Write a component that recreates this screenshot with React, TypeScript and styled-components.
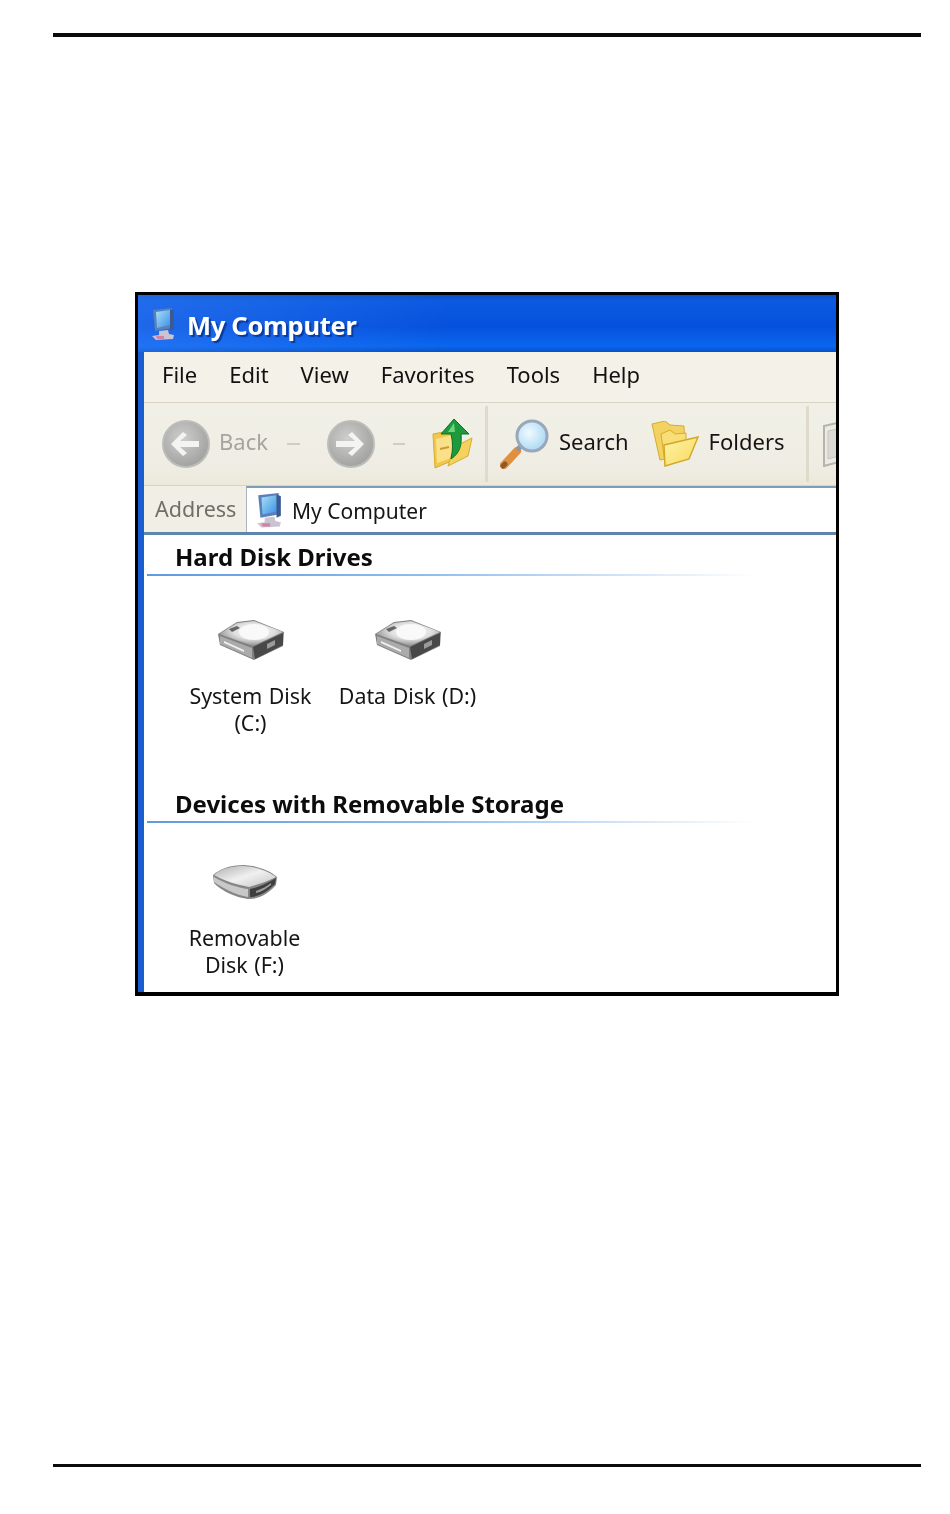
import React from 'react';
import styled, { createGlobalStyle } from 'styled-components';

const GlobalStyle = createGlobalStyle`
  html, body {
    margin: 0;
    padding: 0;
    background: #fff;
  }
`;

const Page = styled.div`
  width: 950px;
  height: 1514px;
  overflow: hidden;
  padding-top: 33px;
  box-sizing: border-box;
  font-family: "Noto Sans", "Liberation Sans", sans-serif;
`;

const Rule = styled.div<{ $thick: number; $top: number }>`
  margin: ${p => p.$top}px 0 0 53px;
  width: 868px;
  height: ${p => p.$thick}px;
  background: #0b0b0b;
`;

const Window = styled.div`
  margin: 255px 0 0 135px;
  width: 704px;
  height: 704px;
  box-sizing: border-box;
  border: 3px solid #000;
  border-bottom-width: 4px;
  background: #fff;
  display: flex;
  flex-direction: column;
  overflow: hidden;
  filter: blur(0.6px);
`;

const TitleBar = styled.div`
  height: 57px;
  flex: none;
  display: flex;
  align-items: center;
  padding-left: 12px;
  gap: 11px;
  background:
    linear-gradient(90deg, rgba(60, 130, 250, 0.45), rgba(10, 80, 220, 0) 45%),
    linear-gradient(180deg, #0c4fc0 0%, #0b5ae0 10%, #0651dc 55%, #0a66ee 90%, #0650c4 100%);
`;

const TitleText = styled.div`
  color: #fff;
  font-size: 25.5px;
  font-weight: 700;
  letter-spacing: -0.3px;
  margin-top: 2px;
  text-shadow: 2px 2px 1px #0a3a9a;
`;

const Body = styled.div`
  flex: 1;
  min-height: 0;
  display: flex;
  flex-direction: column;
  border-left: 6px solid #1a5fd0;
`;

const MenuBar = styled.div`
  height: 50px;
  flex: none;
  display: flex;
  align-items: center;
  gap: 32px;
  padding-left: 18px;
  background: #f3f1e8;
  border-bottom: 1px solid #d8d5c6;
  font-size: 22px;
  color: #111;
`;

const MenuItem = styled.span`
  padding-bottom: 6px;
`;

const ToolBar = styled.div`
  height: 82px;
  flex: none;
  display: flex;
  align-items: center;
  overflow: hidden;
  padding-left: 18px;
  background: linear-gradient(180deg, #f1f0e7 0%, #efede3 80%, #ece9da 100%);
  border-bottom: 1px solid #d8d5c6;
`;

const ToolIcon = styled.div<{ $left?: number }>`
  flex: none;
  display: flex;
  margin-left: ${p => p.$left ?? 0}px;
`;

const ToolLabel = styled.span<{ $muted?: boolean; $left: number }>`
  margin-left: ${p => p.$left}px;
  margin-bottom: 7px;
  font-size: 22px;
  color: ${p => (p.$muted ? '#a4a4a0' : '#141414')};
  flex: none;
`;

const DropHint = styled.span<{ $left: number; $width: number }>`
  flex: none;
  margin-left: ${p => p.$left}px;
  width: ${p => p.$width}px;
  height: 2px;
  background: #cfcdc4;
`;

const Separator = styled.div<{ $left: number }>`
  flex: none;
  margin-left: ${p => p.$left}px;
  width: 3px;
  height: 76px;
  background: #dedbcd;
`;

const AddressBar = styled.div`
  height: 46px;
  flex: none;
  display: flex;
  background: #f1efe5;
  border-bottom: 3px solid #5f85ad;
`;

const AddressLabel = styled.div`
  width: 102px;
  box-sizing: border-box;
  padding-left: 11px;
  flex: none;
  font-size: 21.5px;
  color: #6f6f68;
  display: flex;
  align-items: center;
  padding-bottom: 2px;
`;

const AddressField = styled.div`
  flex: 1;
  display: flex;
  align-items: center;
  gap: 9px;
  padding-left: 8px;
  background: #fff;
  border-left: 1px solid #a9b4bf;
  border-top: 2px solid #7f9db9;
  font-size: 21px;
  color: #151515;
`;

const AddressText = styled.span`
  margin-top: 2px;
`;

const Content = styled.div`
  flex: 1;
  min-height: 0;
  display: flex;
  flex-direction: column;
  background: #fff;
`;

const GroupHeading = styled.div<{ $top: number }>`
  margin-top: ${p => p.$top}px;
  padding-left: 31px;
  padding-bottom: 3px;
  height: 37px;
  box-sizing: border-box;
  display: flex;
  align-items: flex-end;
  font-size: 24px;
  font-weight: 700;
  color: #0c0c0c;
  background: linear-gradient(90deg, #5f9ae0 0%, #8fbcec 40%, #d9e8f8 72%, #fff 88%) left 3px bottom 0 / 100% 2px no-repeat;
`;

const Tiles = styled.div<{ $left: number; $top: number; $height: number }>`
  display: flex;
  padding-left: ${p => p.$left}px;
  padding-top: ${p => p.$top}px;
  height: ${p => p.$height}px;
  box-sizing: border-box;
`;

const Tile = styled.div`
  width: 157px;
  display: flex;
  flex-direction: column;
  align-items: center;
`;

const TileIcon = styled.div<{ $height: number }>`
  height: ${p => p.$height}px;
  display: flex;
  align-items: flex-start;
  filter: blur(0.5px);
`;

const TileLabel = styled.div`
  width: 142px;
  text-align: center;
  font-size: 21.4px;
  line-height: 27px;
  word-spacing: 1px;
  color: #151515;
`;

function ComputerIcon({ size }: { size: number }) {
  return (
    <svg width={size} height={size * 1.27} viewBox="0 0 26 33">
      <defs>
        <linearGradient id="screen" x1="0" y1="0" x2="1" y2="1">
          <stop offset="0" stopColor="#a8e0f6" />
          <stop offset="1" stopColor="#3c90e8" />
        </linearGradient>
      </defs>
      <path d="M3 3 L22 1 L22 21 L5 24 Z" fill="#5b7fb8" />
      <path d="M6 5 L20 3 L20 18 L7 21 Z" fill="url(#screen)" />
      <path d="M20 2 L24 4 L24 22 L20 24 Z" fill="#3b5a94" />
      <path d="M9 24 L18 23 L19 27 L24 28 L23 32 L6 33 L2 29 L9 28 Z" fill="#c9c3d2" />
      <path d="M6 29 L14 29 L14 32 L7 32 Z" fill="#e04a7a" opacity="0.55" />
    </svg>
  );
}

function NavIcon({ flip }: { flip?: boolean }) {
  return (
    <svg width="48" height="48" viewBox="0 0 48 48">
      <defs>
        <radialGradient id="navDisc" cx="0.42" cy="0.38" r="0.7">
          <stop offset="0" stopColor="#cfcfcd" />
          <stop offset="1" stopColor="#9c9c9a" />
        </radialGradient>
      </defs>
      <circle cx="24" cy="24" r="23" fill="url(#navDisc)" stroke="#bcbcba" strokeWidth="2" />
      <path
        d="M9 24 L21 12 L25 15 L18 21 L37 21 L37 27 L18 27 L25 33 L21 36 Z"
        fill="#f4f4f2"
        transform={flip ? 'rotate(180 23 24)' : undefined}
      />
    </svg>
  );
}

function UpIcon() {
  return (
    <svg width="42" height="50" viewBox="0 0 42 50">
      <path d="M1 15 L22 11 L24 40 L3 49 Z" fill="#f0c84e" stroke="#d9ac2c" />
      <path d="M4 20 L21 16 L22 38 L5 44 Z" fill="#fbe08a" />
      <path d="M8 30 L17 28" stroke="#c99a35" strokeWidth="2" />
      <path d="M22 28 L40 19 L36 37 L16 47 Z" fill="#f5d260" stroke="#d9ac2c" />
      <path
        d="M22 0 L37 15 L29 15 C30 26 28 34 19 40 C21 31 21 23 19 15 L9 15 Z"
        fill="#1c9a3c"
        stroke="#0e7029"
      />
      <path d="M22 4 L16 13 L23 13 Z" fill="#6fd27f" />
    </svg>
  );
}

function SearchIcon() {
  return (
    <svg width="50" height="50" viewBox="0 0 50 50">
      <defs>
        <radialGradient id="lens" cx="0.4" cy="0.4" r="0.7">
          <stop offset="0" stopColor="#f0fbff" />
          <stop offset="1" stopColor="#a3d4f2" />
        </radialGradient>
      </defs>
      <path d="M4 46 L17 32" stroke="#e0913e" strokeWidth="8" strokeLinecap="round" />
      <path d="M3 47 L5 45" stroke="#8a5a30" strokeWidth="5" strokeLinecap="round" />
      <path d="M17 31 L22 26" stroke="#8f97a3" strokeWidth="5" />
      <circle cx="32" cy="17" r="15" fill="url(#lens)" stroke="#9aa7bb" strokeWidth="3" />
    </svg>
  );
}

function FoldersIcon() {
  return (
    <svg width="48" height="46" viewBox="0 0 48 46">
      <defs>
        <linearGradient id="folderFront" x1="0" y1="0" x2="1" y2="1">
          <stop offset="0" stopColor="#fff3a8" />
          <stop offset="1" stopColor="#f6d95c" />
        </linearGradient>
      </defs>
      <path d="M1 3 L14 0 L19 4 L33 5 L34 34 L9 39 Z" fill="#f3d262" stroke="#d6ac2c" />
      <path d="M10 13 L19 9 L24 13 L35 12 L35 24 L14 42 Z" fill="#f8de78" stroke="#d6ac2c" />
      <path d="M13 24 L47 16 L38 38 L14 45 Z" fill="url(#folderFront)" stroke="#d2a828" strokeWidth="1.5" />
    </svg>
  );
}

function ViewsIcon() {
  return (
    <svg width="20" height="46" viewBox="0 0 20 46">
      <path d="M1 5 L19 1 L19 40 L1 45 Z" fill="#ecebe3" stroke="#b4b4ac" strokeWidth="2" />
      <path d="M5 10 L19 7 L19 34 L5 38 Z" fill="#dadad2" stroke="#c4c4bc" />
    </svg>
  );
}

function HardDiskIcon() {
  return (
    <svg width="68" height="42" viewBox="0 0 68 42">
      <defs>
        <radialGradient id="hdTop" cx="0.55" cy="0.4" r="0.6">
          <stop offset="0" stopColor="#ffffff" />
          <stop offset="0.55" stopColor="#dedede" />
          <stop offset="1" stopColor="#8e8e8e" />
        </radialGradient>
      </defs>
      <path d="M1 15 L20 3 L37 1 L67 13 L66 27 L37 41 L3 26 Z" fill="#808080" />
      <path d="M2 15 L20 4 L37 2 L66 13 L36 27 Z" fill="url(#hdTop)" />
      <ellipse cx="37" cy="13" rx="15" ry="8" fill="#f9f9f9" />
      <path d="M12 10 L20 7 L23 9 L15 13 Z" fill="#666" />
      <path d="M3 17 L35 29 L35 39 L3 25 Z" fill="#ababab" />
      <path d="M7 22 L27 31 L27 33 L7 24 Z" fill="#efefef" />
      <path d="M36 28 L66 14 L66 26 L38 40 Z" fill="#484848" />
      <path d="M50 25 L58 21 L58 26 L50 30 Z" fill="#9a9a9a" />
    </svg>
  );
}

function RemovableDiskIcon() {
  return (
    <svg width="66" height="36" viewBox="0 0 66 36">
      <defs>
        <linearGradient id="rdTop" x1="0" y1="0" x2="1" y2="1">
          <stop offset="0" stopColor="#b0b0b0" />
          <stop offset="0.5" stopColor="#f0f0f0" />
          <stop offset="1" stopColor="#c4c4c4" />
        </linearGradient>
      </defs>
      <path d="M1 11 C8 5 18 1 32 1 C48 2 60 8 65 13 L64 21 C56 30 46 35 38 35 C26 35 8 26 2 19 Z" fill="#868686" />
      <path d="M2 11 C10 4 20 2 32 2 C46 3 58 8 64 13 C54 18 44 21 37 23 C26 21 10 16 2 11 Z" fill="url(#rdTop)" />
      <path d="M2 13 C12 19 26 24 36 25 L36 33 C24 31 10 24 2 18 Z" fill="#c8c8c8" />
      <path d="M38 25 C47 23 56 19 64 14 L63 20 C55 28 46 33 38 33 Z" fill="#3f3f3f" />
      <path d="M44 27 C50 25 55 22 59 19 L59 21 C54 25 49 28 44 29 Z" fill="#9c9c9c" />
    </svg>
  );
}

const MENU = ['File', 'Edit', 'View', 'Favorites', 'Tools', 'Help'];

export default function App() {
  return (
    <>
      <GlobalStyle />
      <Page>
        <Rule $thick={4} $top={0} />
        <Window>
          <TitleBar>
            <ComputerIcon size={26} />
            <TitleText>My Computer</TitleText>
          </TitleBar>
          <Body>
            <MenuBar>
              {MENU.map(item => <MenuItem key={item}>{item}</MenuItem>)}
            </MenuBar>
            <ToolBar>
              <ToolIcon><NavIcon /></ToolIcon>
              <ToolLabel $muted $left={9}>Back</ToolLabel>
              <DropHint $left={19} $width={13} />
              <ToolIcon $left={27}><NavIcon flip /></ToolIcon>
              <DropHint $left={18} $width={12} />
              <ToolIcon $left={27}><UpIcon /></ToolIcon>
              <Separator $left={11} />
              <ToolIcon $left={12}><SearchIcon /></ToolIcon>
              <ToolLabel $left={9}>Search</ToolLabel>
              <ToolIcon $left={22}><FoldersIcon /></ToolIcon>
              <ToolLabel $left={10}>Folders</ToolLabel>
              <Separator $left={21} />
              <ToolIcon $left={14}><ViewsIcon /></ToolIcon>
            </ToolBar>
            <AddressBar>
              <AddressLabel>Address</AddressLabel>
              <AddressField>
                <ComputerIcon size={28} />
                <AddressText>My Computer</AddressText>
              </AddressField>
            </AddressBar>
            <Content>
              <GroupHeading $top={4}>Hard Disk Drives</GroupHeading>
              <Tiles $left={28} $top={43} $height={211}>
                <Tile>
                  <TileIcon $height={63}><HardDiskIcon /></TileIcon>
                  <TileLabel>System Disk (C:)</TileLabel>
                </Tile>
                <Tile>
                  <TileIcon $height={63}><HardDiskIcon /></TileIcon>
                  <TileLabel>Data Disk (D:)</TileLabel>
                </Tile>
              </Tiles>
              <GroupHeading $top={0}>Devices with Removable Storage</GroupHeading>
              <Tiles $left={22} $top={41} $height={170}>
                <Tile>
                  <TileIcon $height={60}><RemovableDiskIcon /></TileIcon>
                  <TileLabel>Removable Disk (F:)</TileLabel>
                </Tile>
              </Tiles>
            </Content>
          </Body>
        </Window>
        <Rule $thick={3} $top={468} />
      </Page>
    </>
  );
}
